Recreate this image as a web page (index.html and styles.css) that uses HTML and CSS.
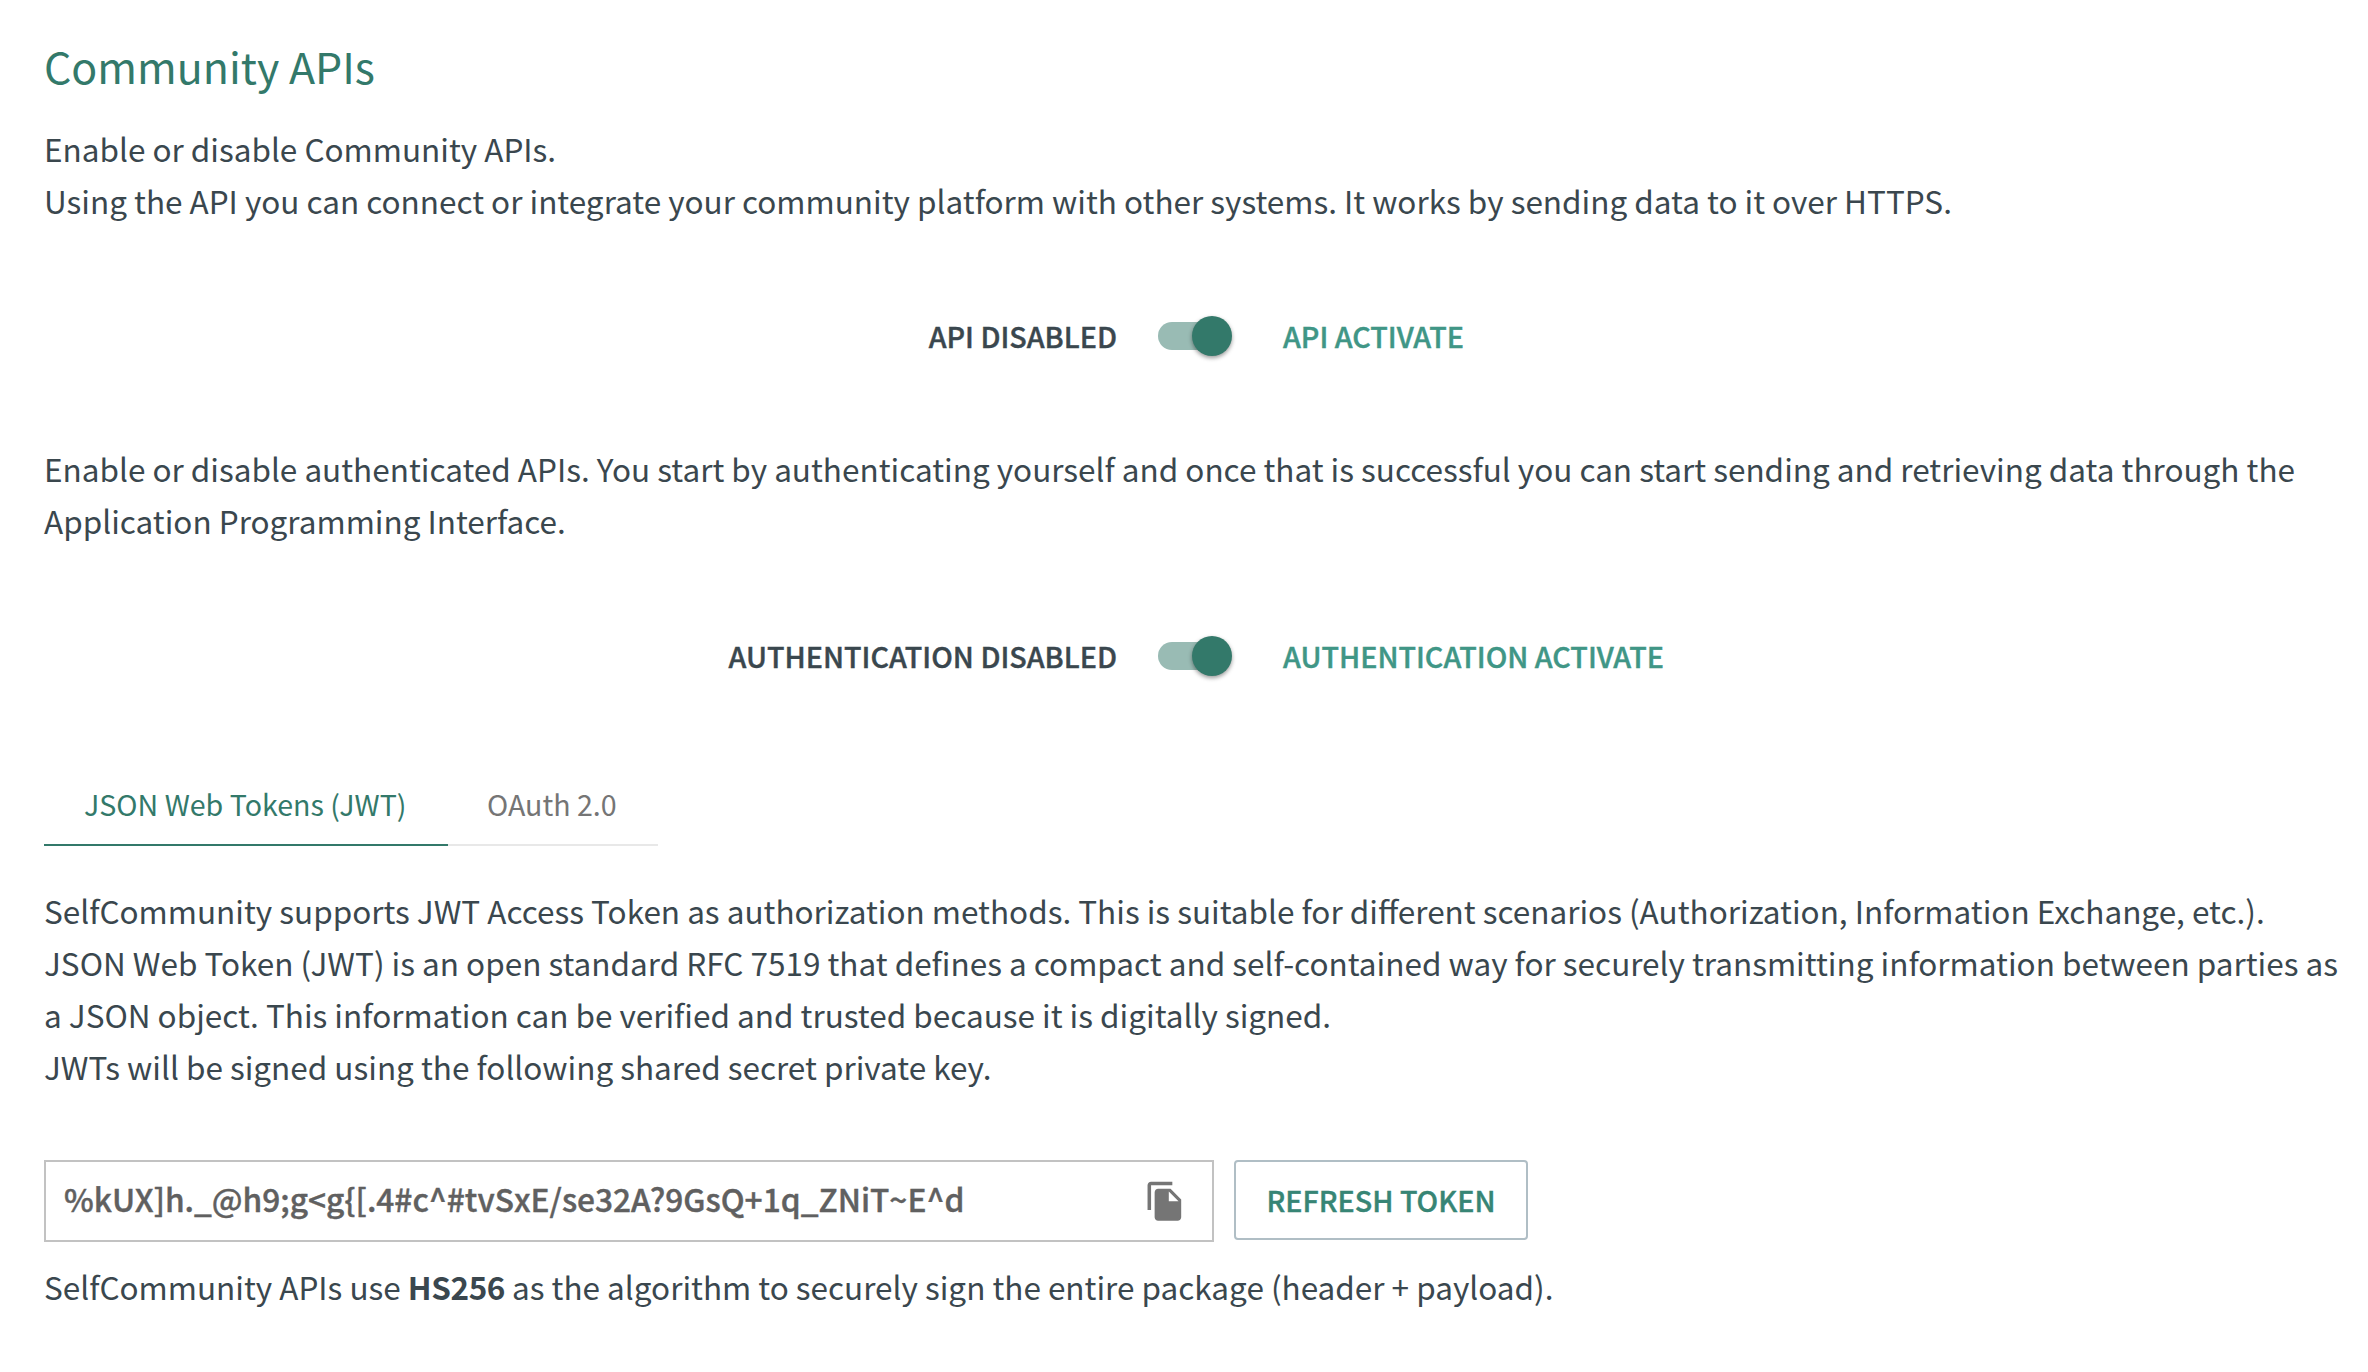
FILE: index.html
```html
<!DOCTYPE html>
<html lang="en">
<head>
<meta charset="utf-8">
<title>Community APIs</title>
<link rel="stylesheet" href="styles.css">
</head>
<body>
<main class="page">
  <h1 class="title">Community APIs</h1>
  <p class="text">Enable or disable Community APIs.<br>Using the API you can connect or integrate your community platform with other systems. It works by sending data to it over HTTPS.</p>
  <div class="toggle">
    <span class="toggle-off">API DISABLED</span>
    <span class="switch"><span class="knob"></span></span>
    <span class="toggle-on">API ACTIVATE</span>
  </div>
  <p class="text">Enable or disable authenticated APIs. You start by authenticating yourself and once that is successful you can start sending and retrieving data through the<br>Application Programming Interface.</p>
  <div class="toggle">
    <span class="toggle-off">AUTHENTICATION DISABLED</span>
    <span class="switch"><span class="knob"></span></span>
    <span class="toggle-on">AUTHENTICATION ACTIVATE</span>
  </div>
  <div class="tabs">
    <span class="tab tab-active">JSON Web Tokens (JWT)</span>
    <span class="tab">OAuth 2.0</span>
  </div>
  <p class="text">SelfCommunity supports JWT Access Token as authorization methods. This is suitable for different scenarios (Authorization, Information Exchange, etc.).<br>JSON Web Token (JWT) is an open standard RFC 7519 that defines a compact and self-contained way for securely transmitting information between parties as<br>a JSON object. This information can be verified and trusted because it is digitally signed.<br>JWTs will be signed using the following shared secret private key.</p>
  <div class="key-row">
    <div class="key-field">
      <span class="key">%kUX]h._@h9;g&lt;g{[.4#c^#tvSxE/se32A?9GsQ+1q_ZNiT~E^d</span>
      <svg class="copy" viewBox="0 0 24 24"><path d="M16 1H4c-1.1 0-2 .9-2 2v14h2V3h12V1zm-1 4 6 6v10c0 1.1-.9 2-2 2H7.990C6.890 23 6 22.1 6 21l.01-14c0-1.1.89-2 1.990-2h7zm-1 7h5.5L14 6.500V12z"/></svg>
    </div>
    <button class="refresh">REFRESH TOKEN</button>
  </div>
  <p class="text">SelfCommunity APIs use <b class="algorithm">HS256</b> as the algorithm to securely sign the entire package (header + payload).</p>
</main>
</body>
</html>
```
FILE: styles.css
```css
* { box-sizing: border-box; }
body { margin: 0; background: #fff; font-family: "Noto Sans CJK JP", "Open Sans", sans-serif; color: #3a474e; }
.page { padding: 32px 0 0 44px; }
.title { margin: 0 0 23px; font-size: 42.9px; line-height: 67px; font-weight: 400; color: #33796a; }
.text { margin: 0; font-size: 31.51px; line-height: 52px; white-space: nowrap; }
.algorithm { letter-spacing: -0.4px; }
.toggle { display: grid; grid-template-columns: 1072px 68px 1fr; align-items: center; height: 216px; padding-top: 4px; font-size: 28.7px; font-weight: 500; column-gap: 42px; -webkit-text-stroke: 0.4px; }
.toggle-off { margin-right: -1px; padding-bottom: 2px; text-align: right; }
.toggle-on { padding: 0 0 2px 15px; color: #409686; }
.switch { display: flex; justify-content: flex-end; align-items: center; height: 28px; border-radius: 14px; background: #99bbb4; }
.knob { flex: none; width: 40px; height: 40px; margin-right: -6px; border-radius: 50%; background: #33796a; box-shadow: 0 2px 4px rgba(0, 0, 0, .4); }
.tabs { display: flex; width: 614px; height: 80px; margin: 4px 0 38px; border-bottom: 2px solid #e8e8e8; }
.tab { flex: none; height: 80px; padding: 0 39px; font-size: 28.6px; line-height: 75px; color: #757575; white-space: nowrap; }
.tab-active { width: 404px; padding-left: 40px; border-bottom: 2px solid #33796a; color: #33796a; }
.key-row { display: flex; gap: 20px; margin: 68px 0 18px; }
.key-field { display: flex; align-items: center; justify-content: space-between; width: 1170px; height: 82px; padding: 0 26px 0 18px; border: 2px solid #c2c2c2; }
.key { padding-bottom: 6px; font-size: 31.66px; font-weight: 500; color: #606060; -webkit-text-stroke: 0.4px; }
.copy { width: 42.5px; height: 42.5px; fill: #757575; }
.refresh { width: 294px; height: 80px; padding: 0 0 2px; border: 2px solid #b0bec5; border-radius: 4px; background: #fff; font: 500 28.7px "Noto Sans CJK JP", sans-serif; color: #378575; -webkit-text-stroke: 0.4px; }
```
